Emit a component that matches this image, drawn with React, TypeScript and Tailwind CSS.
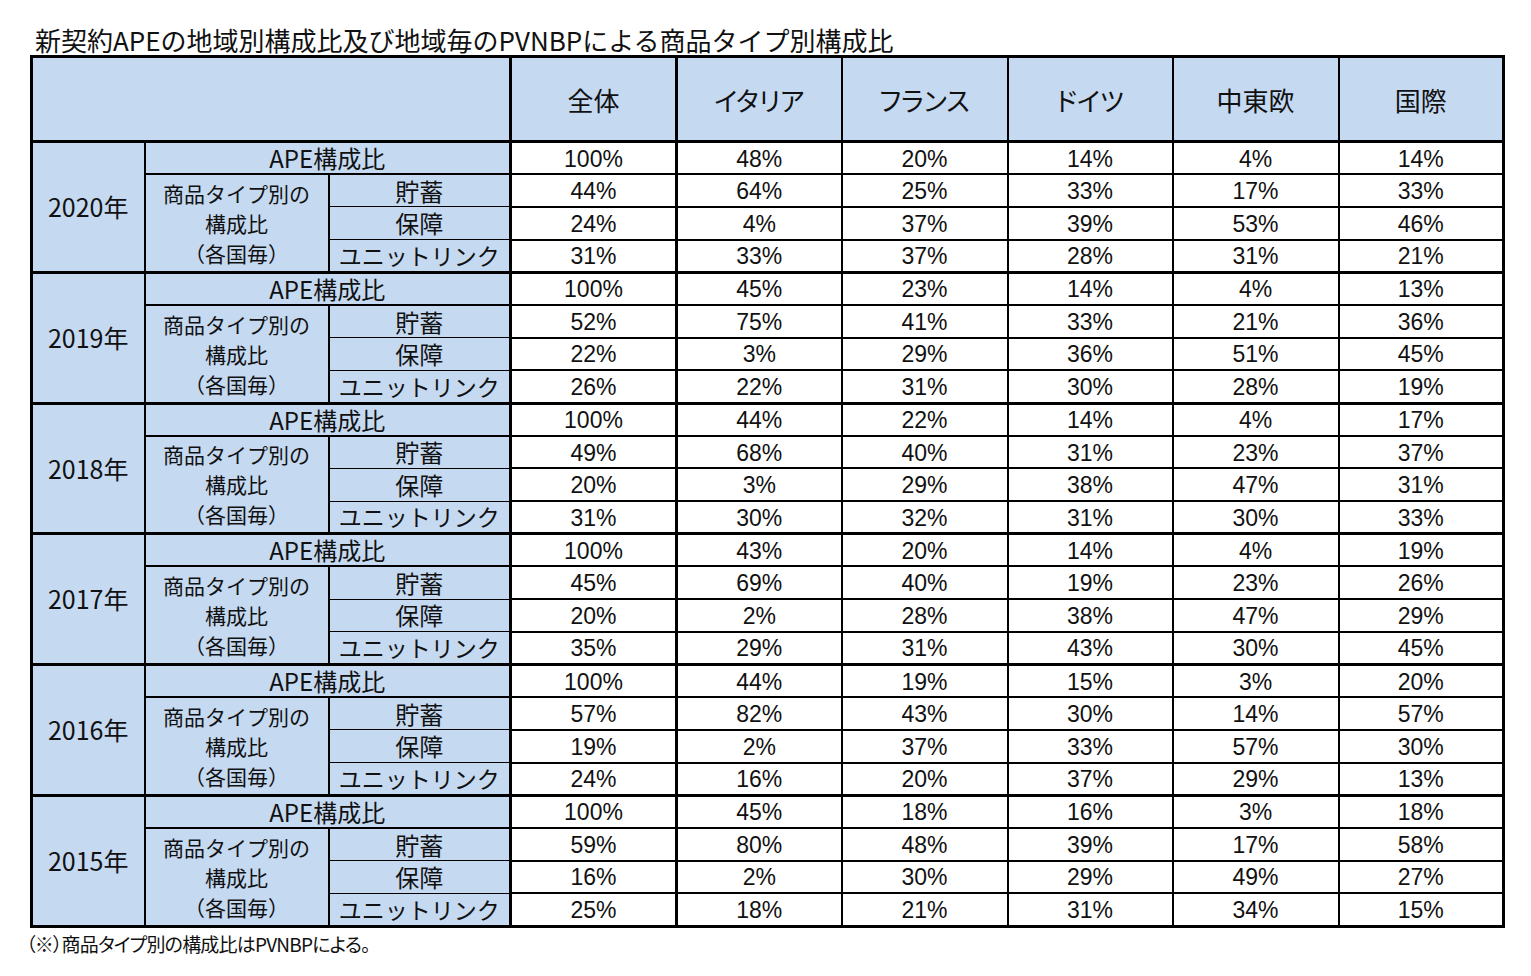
const cols = ["全体", "イタリア", "フランス", "ドイツ", "中東欧", "国際"];

const years = [
  {
    year: "2020年",
    rows: [
      [100, 48, 20, 14, 4, 14],
      [44, 64, 25, 33, 17, 33],
      [24, 4, 37, 39, 53, 46],
      [31, 33, 37, 28, 31, 21],
    ],
  },
  {
    year: "2019年",
    rows: [
      [100, 45, 23, 14, 4, 13],
      [52, 75, 41, 33, 21, 36],
      [22, 3, 29, 36, 51, 45],
      [26, 22, 31, 30, 28, 19],
    ],
  },
  {
    year: "2018年",
    rows: [
      [100, 44, 22, 14, 4, 17],
      [49, 68, 40, 31, 23, 37],
      [20, 3, 29, 38, 47, 31],
      [31, 30, 32, 31, 30, 33],
    ],
  },
  {
    year: "2017年",
    rows: [
      [100, 43, 20, 14, 4, 19],
      [45, 69, 40, 19, 23, 26],
      [20, 2, 28, 38, 47, 29],
      [35, 29, 31, 43, 30, 45],
    ],
  },
  {
    year: "2016年",
    rows: [
      [100, 44, 19, 15, 3, 20],
      [57, 82, 43, 30, 14, 57],
      [19, 2, 37, 33, 57, 30],
      [24, 16, 20, 37, 29, 13],
    ],
  },
  {
    year: "2015年",
    rows: [
      [100, 45, 18, 16, 3, 18],
      [59, 80, 48, 39, 17, 58],
      [16, 2, 30, 29, 49, 27],
      [25, 18, 21, 31, 34, 15],
    ],
  },
];

const subLabels = ["貯蓄", "保障", "ユニットリンク"];

const jp = "font-['Noto_Sans_CJK_JP',sans-serif]";
const num = "font-['Liberation_Sans',Arial,sans-serif]";

// line on the left of each data column
const leftBorder = ["border-l-[3px]", "border-l-[3px]", "border-l-2", "border-l-2", "border-l-2", "border-l-2"];

const DataCells = ({ values, top }: { values: number[]; top: string }) => (
  <>
    {values.map((v, i) => (
      <td
        key={i}
        className={`${leftBorder[i]} ${top} border-b-2 border-black bg-white pt-[2px] text-center text-[23px] leading-none text-[#111] ${num}`}
      >
        {v}%
      </td>
    ))}
  </>
);

const YearBlock = ({ year, rows }: { year: string; rows: number[][] }) => (
  <>
    <tr className="h-[32.7px]">
      <td
        rowSpan={4}
        className={`border-t-[3px] border-r-2 border-black bg-[#c5d9f1] text-center text-[25px] text-[#111] ${jp}`}
      >
        {year}
      </td>
      <td
        colSpan={2}
        className={`border-t-[3px] border-b-2 border-black bg-[#c5d9f1] text-center text-[24px] leading-none text-[#111] ${jp}`}
      >
        APE構成比
      </td>
      <DataCells values={rows[0]} top="border-t-[3px]" />
    </tr>
    {subLabels.map((label, idx) => (
      <tr key={label} className="h-[32.7px]">
        {idx === 0 && (
          <td
            rowSpan={3}
            className={`border-r-2 border-black bg-[#c5d9f1] text-center text-[21px] leading-[30px] text-[#111] ${jp}`}
          >
            商品タイプ別の
            <br />
            構成比
            <br />
            （各国毎）
          </td>
        )}
        <td
          className={`${idx < 2 ? "border-b" : ""} border-black bg-[#c5d9f1] text-center ${idx === 2 ? "text-[23px]" : "text-[24px]"} leading-none text-[#111] ${jp}`}
        >
          {label}
        </td>
        <DataCells values={rows[idx + 1]} top="" />
      </tr>
    ))}
  </>
);

export default function App() {
  return (
    <div className="min-h-[976px] w-[1531px] bg-white pt-[24px] pl-[30px]">
      <h1 className={`ml-[5px] text-[26px] leading-[31px] font-normal text-[#111] ${jp}`}>
        新契約APEの地域別構成比及び地域毎のPVNBPによる商品タイプ別構成比
      </h1>
      <table className="w-[1472px] table-fixed border-collapse border-[3px] border-black">
        <colgroup>
          <col className="w-[113px]" />
          <col className="w-[184px]" />
          <col className="w-[182px]" />
          <col className="w-[166px]" />
          <col className="w-[165px]" />
          <col className="w-[166px]" />
          <col className="w-[165px]" />
          <col className="w-[166px]" />
          <col className="w-[165px]" />
        </colgroup>
        <thead>
          <tr className="h-[85px]">
            <th colSpan={3} className="border-black bg-[#c5d9f1]" />
            {cols.map((c, i) => (
              <th
                key={c}
                className={`${leftBorder[i]} border-black bg-[#c5d9f1] text-center text-[26px] font-normal text-[#111] ${jp} [font-feature-settings:'palt']`}
              >
                {c}
              </th>
            ))}
          </tr>
        </thead>
        <tbody>
          {years.map((y) => (
            <YearBlock key={y.year} year={y.year} rows={y.rows} />
          ))}
        </tbody>
      </table>
      <p
        className={`mt-[3px] -ml-[4px] text-[19px] leading-[26px] tracking-[-0.8px] text-[#111] ${jp} [font-feature-settings:'palt']`}
      >
        （※）商品タイプ別の構成比はPVNBPによる。
      </p>
    </div>
  );
}
